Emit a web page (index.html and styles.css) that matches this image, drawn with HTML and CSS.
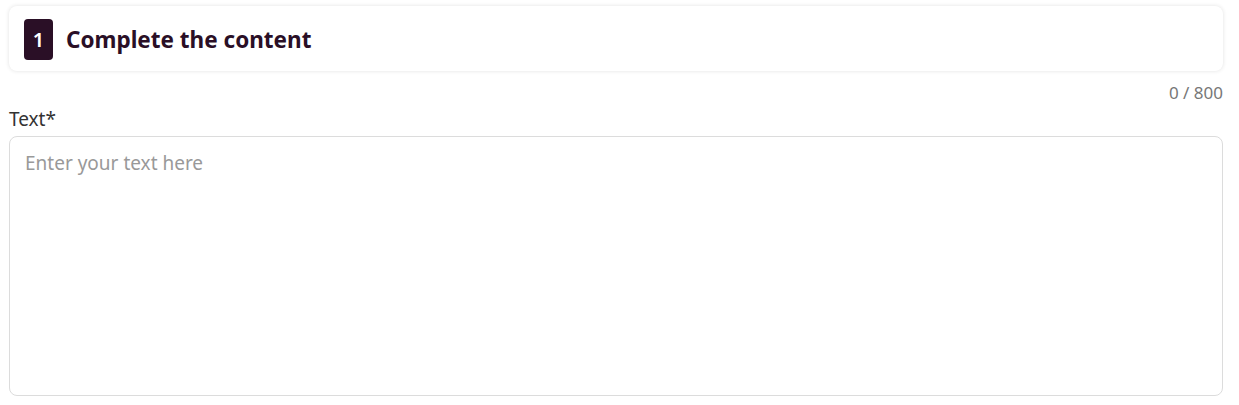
FILE: index.html
```html
<!DOCTYPE html>
<html>
<head>
  <meta charset="UTF-8">
  <meta name="viewport" content="width=device-width, initial-scale=1.0">
  <title>Complete the content</title>
  <link rel="stylesheet" href="styles.css">
</head>
<body>
  <div class="page">
    <div class="step-card">
      <span class="step-num">1</span>
      <h2 class="step-title">Complete the content</h2>
    </div>
    <div class="counter">0 / 800</div>
    <label class="field-label" for="contentText">Text*</label>
    <textarea id="contentText" class="field-text" placeholder="Enter your text here"></textarea>
  </div>
</body>
</html>
```

FILE: styles.css
```css
body {
  margin: 0;
  background-color: #fff;
  font-family: "Noto Sans", "Open Sans", sans-serif;
  color: #222;
}
.page {
  padding: 6px 16px 0 9px;
  display: flex;
  flex-direction: column;
}
.step-card {
  display: flex;
  align-items: center;
  gap: 13px;
  height: 65px;
  padding: 1px 15px 0;
  border-radius: 8px;
  background: #fff;
  box-shadow: 0 0 4px rgba(0, 0, 0, 0.12);
  box-sizing: border-box;
}
.step-num {
  display: flex;
  align-items: center;
  justify-content: center;
  width: 29px;
  height: 41px;
  border-radius: 4px;
  background-color: #2a0f26;
  color: #fff;
  font-size: 20px;
  font-weight: 600;
}
.step-title {
  margin: 0;
  font-size: 22.5px;
  font-weight: 700;
  color: #2a0f26;
}
.counter {
  align-self: flex-end;
  margin-top: 11px;
  font-size: 17px;
  color: #777;
  line-height: 22px;
}
.field-label {
  font-size: 19px;
  line-height: 26px;
  margin-top: 2px;
  color: #333;
  margin-bottom: 4px;
}
.field-text {
  height: 260px;
  padding: 13px 15px;
  border: 1px solid #dcdcdc;
  border-radius: 8px;
  font-family: inherit;
  font-size: 19px;
  color: #333;
  resize: none;
  box-sizing: border-box;
  outline: none;
}
.field-text::placeholder {
  color: #999;
}
```
